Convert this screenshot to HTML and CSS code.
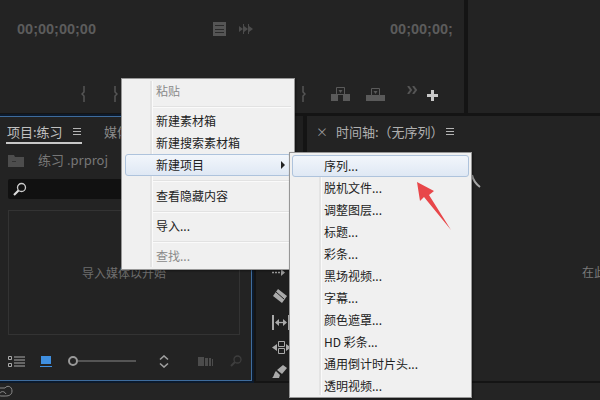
FILE: index.html
```html
<!DOCTYPE html>
<html lang="zh-CN">
<head>
    <meta charset="utf-8">
    <title>Premiere 新建项目</title>
    <link rel="stylesheet" href="styles.css">
</head>
<body>
    <div class="app">
        <div class="top-row">
            <section class="panel source">
                <div class="source-head">
                    <span class="timecode">00;00;00;00</span>
                    <div class="head-icons">
                        <svg width="13" height="14" viewBox="0 0 13 14"><path fill="#555" d="M0 0h13v14H0z"/><path fill="#2a2a2a" d="M2 3h9v1H2zM2 7h9v1H2zM2 10h9v1H2z"/></svg>
                        <svg width="14" height="10" viewBox="0 0 14 10"><path fill="#4c4c4c" d="M0 2l4 3-4 3zM5 2l4 3-4 3zM10 2l4 3-4 3z"/><path fill="#4c4c4c" d="M4 0h1v10H4zM9 0h1v10H9z"/></svg>
                    </div>
                    <span class="timecode right-code">00;00;00;</span>
                </div>
                <div class="source-tools">
                    <svg class="mark-a" width="5" height="16" viewBox="0 0 5 16"><path fill="none" stroke="#555" stroke-width="1.5" d="M3 0v6L1 8l2 2v6"/></svg>
                    <svg class="mark-b" width="5" height="16" viewBox="0 0 5 16"><path fill="none" stroke="#555" stroke-width="1.5" d="M2 0v6l2 2-2 2v6"/></svg>
                    <svg class="mark-c" width="5" height="16" viewBox="0 0 5 16"><path fill="none" stroke="#555" stroke-width="1.5" d="M2 0v6l2 2-2 2v6"/></svg>
                    <svg class="lift" width="19" height="14" viewBox="0 0 19 14"><path fill="#5a5a5a" d="M0 7h7v7H0zM12 7h7v7h-7z"/><path fill="none" stroke="#5a5a5a" d="M5.500 .5h8v7h-8z"/><path fill="#5a5a5a" d="M7.500 3h4l-2 3z"/></svg>
                    <svg class="extract" width="19" height="13" viewBox="0 0 19 13"><path fill="#5a5a5a" d="M0 7h19v6H0z"/><path fill="#232323" stroke="#5a5a5a" d="M5.500 .5h8v7h-8z"/><path fill="#5a5a5a" d="M7.500 3h4l-2 3z"/></svg>
                    <svg class="more" width="11" height="8" viewBox="0 0 11 8"><path fill="none" stroke="#555" stroke-width="2" d="M1 0l3 4-3 4M6 0l3 4-3 4"/></svg>
                    <svg class="plus" width="11" height="11" viewBox="0 0 11 11"><path fill="#c8c8c8" d="M4 0h3v4h4v3H7v4H4V7H0V4h4z"/></svg>
                </div>
            </section>
            <section class="panel program"></section>
        </div>

        <div class="mid-row">
            <section class="panel project">
                <div class="tabs">
                    <span class="tab active">项目:练习</span>
                    <span class="burger"></span>
                    <span class="tab other">媒体</span>
                </div>
                <div class="file-row">
                    <svg width="16" height="12" viewBox="0 0 16 12"><path fill="#4d4d4d" d="M0 0h6l1 2h9v10H0z"/><path fill="#333" d="M4 6h4v1H4z"/></svg>
                    <span class="file-name">练习 .prproj</span>
                </div>
                <div class="search">
                    <svg width="14" height="14" viewBox="0 0 14 14"><circle cx="8.500" cy="5.500" r="4" fill="none" stroke="#ccc" stroke-width="1.300"/><path stroke="#ddd" stroke-width="2.200" d="M5.500 8.500L1 13"/></svg>
                </div>
                <div class="drop-box">导入媒体以开始</div>
                <div class="project-tools">
                    <svg width="17" height="11" viewBox="0 0 17 11"><path fill="none" stroke="#aaa" d="M.5 .5h3v3h-3zM.5 7.500h3v3h-3z"/><path stroke="#aaa" d="M6 1h11M6 4h11M6 7h11M6 10h11"/></svg>
                    <svg class="icon-view" width="12" height="11" viewBox="0 0 12 11"><path fill="#3f8fe0" d="M1 0h10v8H1z"/><path fill="#3f8fe0" d="M0 10h12v1H0z"/></svg>
                    <div class="zoom-slider"><span class="knob"></span><span class="track"></span></div>
                    <svg class="icon-sort" width="10" height="13" viewBox="0 0 10 13"><path fill="none" stroke="#a0a0a0" stroke-width="1.600" d="M1 4.500L5 1l4 3.500M1 8.500L5 12l4-3.500"/></svg>
                    <svg class="icon-bins" width="15" height="9" viewBox="0 0 15 9"><path fill="#4c4c4c" d="M0 0h6v9H0zM7 1h3v8H7zM11 1h2v8h-2zM14 2h1v7h-1z"/></svg>
                    <svg class="icon-find" width="12" height="12" viewBox="0 0 12 12"><circle cx="7.500" cy="4.500" r="3.500" fill="none" stroke="#3e3e3e" stroke-width="1.300"/><path stroke="#3e3e3e" stroke-width="2" d="M5 7l-4 4"/></svg>
                </div>
            </section>

            <section class="panel toolbox">
                <svg width="14" height="9" viewBox="0 0 14 9"><path stroke="#999" stroke-width="1.500" stroke-dasharray="2 1" d="M0 4.500h9"/><path fill="#999" d="M9 1l4 3.500L9 8z"/></svg>
                <svg width="16" height="16" viewBox="0 0 16 16"><path fill="#aaa" d="M6 1l9 7-5 7-9-7z"/><path stroke="#232323" d="M4 4l8 7"/></svg>
                <svg width="18" height="15" viewBox="0 0 18 15"><path fill="#aaa" d="M0 0h2v15H0zM16 0h2v15h-2z"/><path stroke="#aaa" stroke-width="1.300" d="M5 7.500h8"/><path fill="#aaa" d="M7 4v7L3 7.500zM11 4v7l4-3.500z"/></svg>
                <svg width="19" height="13" viewBox="0 0 19 13"><path fill="none" stroke="#aaa" d="M6.500 .5h6v5h-6zM6.500 7.500h6v5h-6z"/><path fill="#aaa" d="M5 3v7L0 6.500zM14 3v7l5-3.500z"/></svg>
                <svg width="16" height="13" viewBox="0 0 16 13"><path fill="#aaa" d="M11 0l4 3-5 6-5-4zM4 6l4 4-1 3H0c2-1 2-5 4-7z"/></svg>
            </section>

            <section class="panel timeline">
                <div class="timeline-tab">
                    <span class="close">×</span>
                    <span class="timeline-title">时间轴:（无序列）</span>
                    <span class="burger"></span>
                </div>
                <div class="timeline-hint">在此</div>
                <svg class="tool-tip" width="10" height="14" viewBox="0 0 10 14"><path fill="none" stroke="#a8a8a8" stroke-width="2" d="M1 1c1 5 4 9 8 12"/></svg>
            </section>
        </div>

        <div class="status-bar">
            <svg width="13" height="12" viewBox="0 0 13 12"><path fill="none" stroke="#8a8a8a" d="M-1 3h6c2-3 7-2 7 3s-5 5-7 5H1c-2 0-2-3 0-4 2-1 4 0 5 2"/></svg>
        </div>
    </div>

    <ul class="menu context-menu">
        <li class="off">粘贴</li>
        <li class="sep"></li>
        <li>新建素材箱</li>
        <li>新建搜索素材箱</li>
        <li class="hot has-sub">新建项目</li>
        <li class="sep"></li>
        <li>查看隐藏内容</li>
        <li class="sep"></li>
        <li>导入...</li>
        <li class="sep"></li>
        <li class="off">查找...</li>
    </ul>

    <ul class="menu sub-menu">
        <li class="hot">序列...</li>
        <li>脱机文件...</li>
        <li>调整图层...</li>
        <li>标题...</li>
        <li>彩条...</li>
        <li>黑场视频...</li>
        <li>字幕...</li>
        <li>颜色遮罩...</li>
        <li>HD 彩条...</li>
        <li>通用倒计时片头...</li>
        <li>透明视频...</li>
    </ul>

    <svg class="red-arrow" width="36" height="50" viewBox="0 0 36 50"><path fill="#e8474a" d="M1 0l17 9-5 4 22 35L8 15l-4 4z"/></svg>
</body>
</html>
```

FILE: styles.css
```css
* {
    box-sizing: border-box;
}

body {
    margin: 0;
    width: 600px;
    height: 400px;
    overflow: hidden;
    background-color: #141414;
    font-family: "Noto Sans CJK SC", "Liberation Sans", sans-serif;
    position: relative;
}

svg {
    display: block;
    flex: none;
}

.app {
    display: flex;
    flex-direction: column;
    height: 400px;
}

.panel {
    background-color: #232323;
}

.top-row {
    display: flex;
    gap: 4px;
    height: 113px;
    margin-bottom: 3px;
}

.source {
    width: 464px;
    display: flex;
    flex-direction: column;
}

.program {
    flex: 1;
}

.source-head {
    display: flex;
    align-items: center;
    height: 60px;
    padding-left: 17px;
    padding-bottom: 2px;
}

.timecode {
    width: 80px;
    font-family: "Liberation Sans", sans-serif;
    font-size: 14.500px;
    font-weight: bold;
    color: #5c5c5c;
    white-space: nowrap;
}

.head-icons {
    display: flex;
    align-items: center;
    gap: 13px;
    margin-left: 117px;
}

.right-code {
    margin-left: 137px;
}

.source-tools {
    display: flex;
    align-items: center;
    height: 26px;
    padding-left: 81px;
    margin-top: 21px;
}

.mark-b {
    margin-left: 27px;
}

.mark-c {
    margin-left: 183px;
}

.lift {
    margin-left: 25px;
}

.extract {
    margin-left: 16px;
}

.more {
    margin: 0 0 8px 22px;
}

.plus {
    margin: 2px 0 0 9px;
}

.mid-row {
    display: flex;
    height: 265px;
}

.project {
    width: 252px;
    border: 1px solid #3f6c9c;
    border-left: none;
    outline: 2px solid #0c1a2c;
    padding-left: 8px;
    display: flex;
    flex-direction: column;
    position: relative;
}

.tabs {
    display: flex;
    align-items: center;
    height: 26px;
    padding-top: 3px;
    margin-left: -2px;
    position: relative;
}

.tab {
    font-size: 13px;
    color: #c0c0c0;
    line-height: 22px;
}

.tab.active {
    padding: 0 1px;
    width: 60px;
}

.tab.other {
    margin-left: 23px;
    color: #8a8a8a;
}

.tabs::after {
    content: "";
    position: absolute;
    left: 0;
    top: 25px;
    width: 76px;
    height: 2px;
    background-color: #c8c8c8;
}

.burger {
    width: 8px;
    height: 7px;
    margin-left: 7px;
    border-top: 1px solid #b4b4b4;
    border-bottom: 1px solid #b4b4b4;
    position: relative;
}

.burger::after {
    content: "";
    position: absolute;
    left: 0;
    right: 0;
    top: 2px;
    height: 1px;
    background-color: #b4b4b4;
}

.file-row {
    display: flex;
    align-items: center;
    gap: 14px;
    height: 28px;
    margin-top: 5px;
    padding-bottom: 2px;
}

.file-name {
    font-size: 13px;
    line-height: 18px;
    margin-bottom: 2px;
    color: #777;
}

.search {
    display: flex;
    align-items: center;
    height: 20px;
    margin-top: 3px;
    margin-right: -1px;
    padding-left: 5px;
    background-color: #111;
    border-radius: 2px;
}

.drop-box {
    display: flex;
    align-items: center;
    justify-content: center;
    width: 232px;
    height: 125px;
    margin-top: 11px;
    border: 1px solid #333;
    font-size: 12px;
    color: #6e6e6e;
}

.project-tools {
    display: flex;
    align-items: center;
    flex: 1;
    padding-top: 7px;
}

.icon-view {
    margin-left: 15px;
}

.zoom-slider {
    display: flex;
    align-items: center;
    margin-left: 16px;
}

.knob {
    width: 10px;
    height: 10px;
    border: 2px solid #999;
    border-radius: 50%;
}

.track {
    width: 58px;
    height: 2px;
    background-color: #555;
}

.icon-sort {
    margin-left: 23px;
}

.icon-bins {
    margin-left: 29px;
}

.icon-find {
    margin-left: 17px;
}

.toolbox {
    width: 47px;
    margin-left: 4px;
    padding: 152px 0 0 16px;
    display: flex;
    flex-direction: column;
    gap: 11px;
    background-color: #1f1f1f;
}

.timeline {
    flex: 1;
    margin-left: 4px;
    position: relative;
}

.timeline-tab {
    display: flex;
    align-items: center;
    height: 30px;
    padding-left: 9px;
}

.close {
    font-size: 12px;
    color: #999;
    width: 20px;
}

.timeline-title {
    font-size: 13px;
    color: #b0b0b0;
    white-space: nowrap;
}

.timeline .burger {
    margin-left: 2px;
}

.timeline-hint {
    position: absolute;
    left: 275px;
    top: 147px;
    font-size: 12px;
    white-space: nowrap;
    color: #7a7a7a;
}

.tool-tip {
    position: absolute;
    left: 164px;
    top: 58px;
}

.status-bar {
    flex: 1;
    display: flex;
    align-items: flex-end;
    margin-top: 2px;
    padding-bottom: 3px;
    background-color: #242424;
}

.menu {
    position: absolute;
    margin: 0;
    padding: 1px 3px;
    list-style: none;
    background-color: #f0f0f0;
    border: 1px solid #979797;
    font-size: 12px;
    color: #222;
    box-shadow: 1px 1px 2px rgba(0, 0, 0, 0.4);
}

.menu::before {
    content: "";
    position: absolute;
    top: 2px;
    bottom: 2px;
    width: 2px;
    background-color: #e4e4e4;
    border-right: 1px solid #fafafa;
}

.menu li {
    position: relative;
    display: flex;
    align-items: center;
    height: 22px;
    padding-bottom: 2px;
    border: 1px solid transparent;
    border-radius: 3px;
}

.context-menu {
    left: 121px;
    top: 78px;
    width: 174px;
    height: 192px;
}

.context-menu::before {
    left: 28px;
}

.context-menu li {
    padding-left: 30px;
}

.sub-menu {
    left: 289px;
    top: 152px;
    width: 183px;
    height: 246px;
    padding: 2px;
}

.sub-menu::before {
    left: 29px;
}

.sub-menu li {
    padding-left: 31px;
}

.menu .off {
    color: #8a8a8a;
}

.menu .hot {
    background: linear-gradient(#f2f6fb, #dfe8f4);
    border-color: #aec3dc;
}

.context-menu .sep {
    height: 1px;
    margin: 5px 0 2px 28px;
    padding: 0;
    border: none;
    border-radius: 0;
    background-color: #fafafa;
    box-shadow: 0 -1px 0 #e2e2e2;
}

.context-menu .hot + .sep {
    margin-bottom: 3px;
}

.has-sub::after {
    content: "";
    position: absolute;
    right: 5px;
    top: 6px;
    border-left: 4px solid #222;
    border-top: 4px solid transparent;
    border-bottom: 4px solid transparent;
}

.red-arrow {
    position: absolute;
    left: 416px;
    top: 182px;
}
```
